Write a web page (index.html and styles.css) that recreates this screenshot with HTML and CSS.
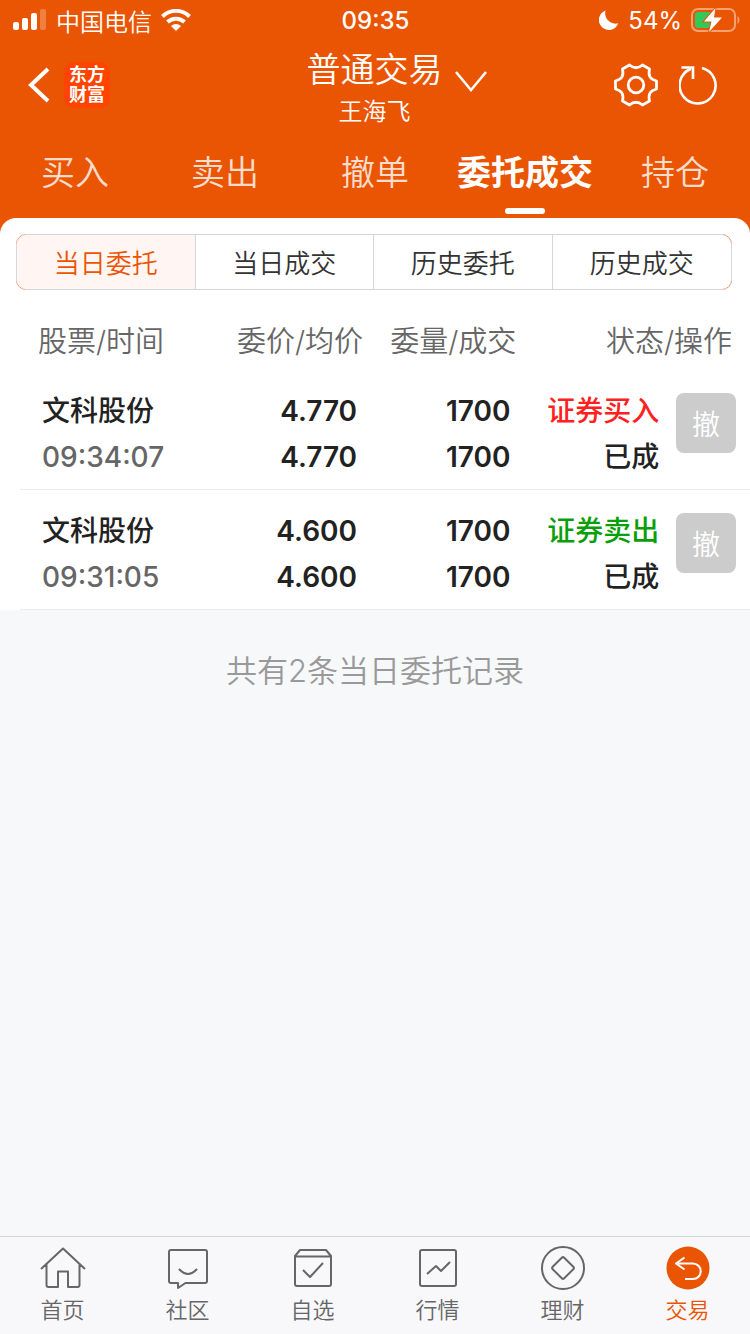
FILE: index.html
```html
<!DOCTYPE html>
<html lang='zh-CN'>
  <head>
    <meta charset='UTF-8'>
    <meta name='viewport' content='width=device-width, initial-scale=1.0'>
    <title>普通交易</title>
    <link rel="stylesheet" href="styles.css">
  </head>
  <body>
    <div class='header'>
      <div class='status'>
        <div class='status__left'>
          <svg width='34' height='22' viewBox='0 0 34 22' fill='#fff'>
            <rect x='0' y='13' width='6' height='8' rx='2'/>
            <rect x='9' y='9' width='6' height='12' rx='2'/>
            <rect x='18' y='4' width='6' height='17' rx='2'/>
            <rect x='27' y='0' width='6' height='21' rx='2' opacity='.25'/>
          </svg>
          <span class='status__carrier'>中国电信</span>
          <svg width='30' height='22' viewBox='0 0 30 22' fill='none' stroke='#fff' stroke-width='4'>
            <path d='M1.5 7.5a19 19 0 0 1 27 0'/>
            <path d='M6.5 13a12.5 12.5 0 0 1 17 0'/>
            <path d='M15 22l-5-5a7.5 7.5 0 0 1 10 0z' fill='#fff' stroke='none'/>
          </svg>
        </div>
        <div class='status__time'>09:35</div>
        <div class='status__right'>
          <svg width='20' height='20' viewBox='0 0 20 20' fill='#fff'>
            <path d='M6.500 .5a10 10 0 1 0 12.800 12.800A10.500 10.500 0 0 1 6.500 .5z'/>
          </svg>
          <span class='status__percent'>54%</span>
          <svg width='49' height='24' viewBox='0 0 49 24'>
            <rect x='1' y='1' width='43' height='22' rx='6' fill='none' stroke='#fff' stroke-opacity='.45' stroke-width='2'/>
            <path d='M46.500 8c2.500 1.200 2.500 6.800 0 8z' fill='#fff' opacity='.45'/>
            <rect x='4' y='4' width='18' height='16' rx='3' fill='#34c759'/>
            <path d='M24.500 0L13 13.500h7.500L18 24 31 9.500h-8z' fill='#fff' stroke='#ea5504' stroke-width='2' paint-order='stroke'/>
          </svg>
        </div>
      </div>
      <div class='header__bar'>
        <div class='header__left'>
          <button class='header__btn' aria-label='返回'>
            <svg width='22' height='36' viewBox='0 0 22 36' fill='none' stroke='#fff' stroke-width='4'>
              <path d='M20 2L3 18l17 16'/>
            </svg>
          </button>
          <div class='header__logo'>东方<br>财富</div>
        </div>
        <button class='header__title'>
          <span class='title__text'>
            <span class='title__name'>普通交易</span>
            <span class='title__user'>王海飞</span>
          </span>
          <svg class='title__arrow' width='32' height='22' viewBox='0 0 32 22' fill='none' stroke='#fff' stroke-width='2.500'>
            <path d='M1 1l15 18L31 1'/>
          </svg>
        </button>
        <div class='header__right'>
          <button class='header__btn' aria-label='设置'>
            <svg width='44' height='44' viewBox='0 0 44 44' fill='none' stroke='#fff' stroke-width='2.800' stroke-linejoin='round'>
              <path d='M15.500 2Q22 7.500 28.500 2L35.500 6C34 13 36 16 42.500 18V26C36 28 34 31 35.500 38L28.500 42Q22 36.500 15.500 42L8.500 38C10 31 8 28 1.500 26V18C8 16 10 13 8.500 6Z'/>
              <circle cx='22' cy='22' r='7.800'/>
            </svg>
          </button>
          <button class='header__btn' aria-label='刷新'>
            <svg width='40' height='40' viewBox='0 0 40 40' fill='none' stroke='#fff' stroke-width='2.600'>
              <path d='M23 3A18 18 0 1 1 12 3.700'/>
              <path d='M2.500 2.500H14V14'/>
            </svg>
          </button>
        </div>
      </div>
      <nav class='tabs'>
        <a class='tabs__item' href='#'>买入</a>
        <a class='tabs__item' href='#'>卖出</a>
        <a class='tabs__item' href='#'>撤单</a>
        <a class='tabs__item tabs__item--active' href='#'>委托成交</a>
        <a class='tabs__item' href='#'>持仓</a>
      </nav>
    </div>

    <div class='content'>
      <div class='panel'>
        <div class='segment'>
          <button class='segment__item segment__item--active'>当日委托</button>
          <button class='segment__item'>当日成交</button>
          <button class='segment__item'>历史委托</button>
          <button class='segment__item'>历史成交</button>
        </div>
        <table class='orders'>
          <colgroup>
            <col class='col__stock'>
            <col class='col__price'>
            <col class='col__amount'>
            <col class='col__state'>
            <col class='col__action'>
          </colgroup>
          <thead>
            <tr>
              <th>股票/时间</th>
              <th>委价/均价</th>
              <th>委量/成交</th>
              <th colspan='2'>状态/操作</th>
            </tr>
          </thead>
          <tbody>
            <tr>
              <td class='orders__stock'>文科股份<div class='orders__time'>09:34:07</div></td>
              <td class='orders__price'>4.770<br>4.770</td>
              <td class='orders__amount'>1700<br>1700</td>
              <td class='orders__state'><span class='buy'>证券买入</span><br>已成</td>
              <td class='orders__action'><button class='orders__cancel' disabled>撤</button></td>
            </tr>
            <tr>
              <td class='orders__stock'>文科股份<div class='orders__time'>09:31:05</div></td>
              <td class='orders__price'>4.600<br>4.600</td>
              <td class='orders__amount'>1700<br>1700</td>
              <td class='orders__state'><span class='sell'>证券卖出</span><br>已成</td>
              <td class='orders__action'><button class='orders__cancel' disabled>撤</button></td>
            </tr>
          </tbody>
        </table>
      </div>
      <div class='content__total'>共有2条当日委托记录</div>
    </div>

    <nav class='footer'>
      <a class='footer__item' href='#'>
        <svg class='footer__icon' viewBox='0 0 46 46'>
          <path d='M1 23L23 2.500 45 23M6.500 18.500V39a2 2 0 0 0 2 2H18V25.500H28V41h9.500a2 2 0 0 0 2-2V18.500'/>
        </svg>
        首页
      </a>
      <a class='footer__item' href='#'>
        <svg class='footer__icon' viewBox='0 0 46 46'>
          <path d='M6 4H40a2 2 0 0 1 2 2V35a2 2 0 0 1-2 2H20.500L13 42V37H6a2 2 0 0 1-2-2V6a2 2 0 0 1 2-2z'/>
          <path d='M14 23q9 10 18 0'/>
        </svg>
        社区
      </a>
      <a class='footer__item' href='#'>
        <svg class='footer__icon' viewBox='0 0 46 46'>
          <path d='M5 10L10 4H36L41 10V38a2 2 0 0 1-2 2H7a2 2 0 0 1-2-2zM5 10.500H41'/>
          <path d='M13 24l7 7 13-14'/>
        </svg>
        自选
      </a>
      <a class='footer__item' href='#'>
        <svg class='footer__icon' viewBox='0 0 46 46'>
          <rect x='5' y='4' width='36' height='36' rx='2'/>
          <path d='M12 28l9-8 5 5 9-9'/>
        </svg>
        行情
      </a>
      <a class='footer__item' href='#'>
        <svg class='footer__icon' viewBox='0 0 46 46'>
          <circle cx='23' cy='22' r='21'/>
          <path d='M21.800 11.700a1.700 1.700 0 0 1 2.400 0L33.300 20.800a1.700 1.700 0 0 1 0 2.400L24.200 32.300a1.700 1.700 0 0 1-2.400 0L12.700 23.200a1.700 1.700 0 0 1 0-2.400z'/>
        </svg>
        理财
      </a>
      <a class='footer__item footer__item--active' href='#'>
        <svg class='footer__icon' viewBox='0 0 46 46'>
          <circle cx='23' cy='22' r='21.500' fill='#ea5504' stroke='none'/>
          <path d='M19.500 11.500L11 17.500l8.500 6M11 17.500H28a7.700 7.700 0 0 1 0 15.500H20' stroke='#fff'/>
        </svg>
        交易
      </a>
    </nav>
  </body>
</html>
```
FILE: styles.css
```css
html, body {
  margin: 0;
  font-family: Inter, 'Noto Sans CJK SC', sans-serif;
}

body {
  display: flex;
  flex-direction: column;
  min-height: 100vh;
  background-color: #f7f8fa;
}

button {
  padding: 0;
  border: 0;
  background: transparent;
  color: inherit;
  font-family: inherit;
}

a {
  color: inherit;
  text-decoration: none;
}

svg {
  display: block;
}

.header {
  padding-bottom: 16px;
  background-color: #ea5504;
  color: #fff;
}

/* status bar */

.status {
  display: grid;
  grid-template-columns: 1fr auto 1fr;
  align-items: center;
  height: 40px;
  padding: 0 12px 0 13px;
  font-size: 24px;
}

.status__left,
.status__right {
  display: flex;
  align-items: center;
  gap: 9px;
}

.status__right {
  justify-content: flex-end;
  margin-right: -2px;
}

.status__carrier {
  font-weight: 350;
}

.status__time {
  font-weight: 500;
}

/* title bar */

.header__bar {
  display: grid;
  grid-template-columns: 1fr auto 1fr;
  align-items: center;
  height: 88px;
  padding: 0 31px 0 28px;
}

.header__left,
.header__right {
  display: flex;
  align-items: center;
  gap: 14px;
}

.header__right {
  justify-content: flex-end;
  gap: 21px;
}

.header__logo {
  width: 46px;
  padding: 3px 0;
  border-radius: 10px;
  background-color: #ff4400;
  font-size: 18px;
  font-weight: 700;
  line-height: 20px;
  text-align: center;
}

.header__title {
  position: relative;
  padding: 6px 0 0 2px;
  font-weight: 350;
}

.title__name,
.title__user {
  display: block;
}

.title__name {
  font-size: 34px;
  line-height: 48px;
}

.title__user {
  font-size: 24px;
  line-height: 36px;
}

.title__arrow {
  position: absolute;
  top: 31px;
  left: 100%;
  margin-left: 12px;
}

/* trade tabs */

.tabs {
  display: grid;
  grid-template-columns: repeat(5, 1fr);
  font-size: 34px;
  font-weight: 350;
  line-height: 90px;
  text-align: center;
}

.tabs__item {
  position: relative;
  color: #fcdccb;
}

.tabs__item--active {
  color: #fff;
  font-weight: 700;
}

.tabs__item--active::after {
  content: '';
  position: absolute;
  bottom: 4px;
  left: 50%;
  width: 40px;
  height: 6px;
  border-radius: 3px;
  background-color: #fff;
  transform: translateX(-50%);
}

/* orders */

.content {
  flex: 1;
}

.panel {
  margin-top: -16px;
  padding-top: 16px;
  border-radius: 16px 16px 0 0;
  background-color: #fff;
}

.segment {
  position: relative;
  display: grid;
  grid-template-columns: repeat(4, 1fr);
  margin: 0 18px 24px 16px;
  border: 1px solid #ea9a74;
  border-radius: 10px;
}

/* grey straight edges, only the corners stay orange */
.segment::before,
.segment::after {
  content: '';
  position: absolute;
  border: solid #d5d7dc;
  pointer-events: none;
}

.segment::before {
  top: 8px;
  right: -1px;
  bottom: 8px;
  left: -1px;
  border-width: 0 1px;
}

.segment::after {
  top: -1px;
  right: 8px;
  bottom: -1px;
  left: 8px;
  border-width: 1px 0;
}

.segment__item {
  height: 54px;
  padding-bottom: 2px;
  border-right: 1px solid #d5d7dc;
  color: #333;
  font-size: 26px;
  font-weight: 350;
}

.segment__item:last-child {
  border-right: 0;
}

.segment__item--active {
  border-radius: 9px 0 0 9px;
  background-color: #fff5f2;
  color: #ea5504;
}

.orders {
  width: calc(100% - 20px);
  margin-left: 20px;
  border-collapse: collapse;
  table-layout: fixed;
  color: #222;
  font-size: 28px;
  line-height: 46px;
  text-align: right;
}

.col__stock { width: 24%; }
.col__price { width: 23%; }
.col__amount { width: 21%; }
.col__state { width: 20%; }
.col__action { width: 12%; }

.orders th {
  padding: 0;
  color: #666;
  font-size: 29px;
  font-weight: 350;
  line-height: 56px;
  white-space: nowrap;
}

.orders th:first-child {
  padding-left: 18px;
  text-align: left;
}

.orders th:last-child {
  padding-right: 18px;
}

.orders td {
  padding: 18px 0 9px;
  border-bottom: 1px solid #ebebeb;
  font-weight: 600;
  vertical-align: top;
  white-space: nowrap;
}

.orders .orders__stock {
  padding-left: 22px;
  font-weight: 500;
  text-align: left;
}

.orders__time {
  color: #666;
}

.orders .orders__price,
.orders .orders__amount {
  padding-right: 6px;
}

.orders .orders__state {
  padding-right: 3px;
  font-weight: 500;
}

.orders .orders__action {
  padding: 23px 14px 0 0;
}

.orders__cancel {
  width: 60px;
  height: 60px;
  border-radius: 8px;
  background-color: #ccc;
  color: #fff;
  font-size: 28px;
  font-weight: 350;
  vertical-align: top;
}

.buy {
  color: #ff2020;
}

.sell {
  color: #0a9f0a;
}

.content__total {
  padding: 38px 0;
  color: #999;
  font-size: 31px;
  font-weight: 350;
  line-height: 46px;
  text-align: center;
}

/* bottom navigation */

.footer {
  display: grid;
  grid-template-columns: repeat(6, 1fr);
  padding: 9px 0 6px;
  border-top: 1px solid #d0d8d8;
  background-color: #f8f8fb;
}

.footer__item {
  display: flex;
  flex-direction: column;
  align-items: center;
  color: #666;
  font-size: 22px;
  font-weight: 350;
  line-height: 36px;
}

.footer__item--active {
  color: #ea5504;
}

.footer__icon {
  width: 46px;
  height: 46px;
  fill: none;
  stroke: #666;
  stroke-width: 2;
  stroke-linejoin: round;
}
```
